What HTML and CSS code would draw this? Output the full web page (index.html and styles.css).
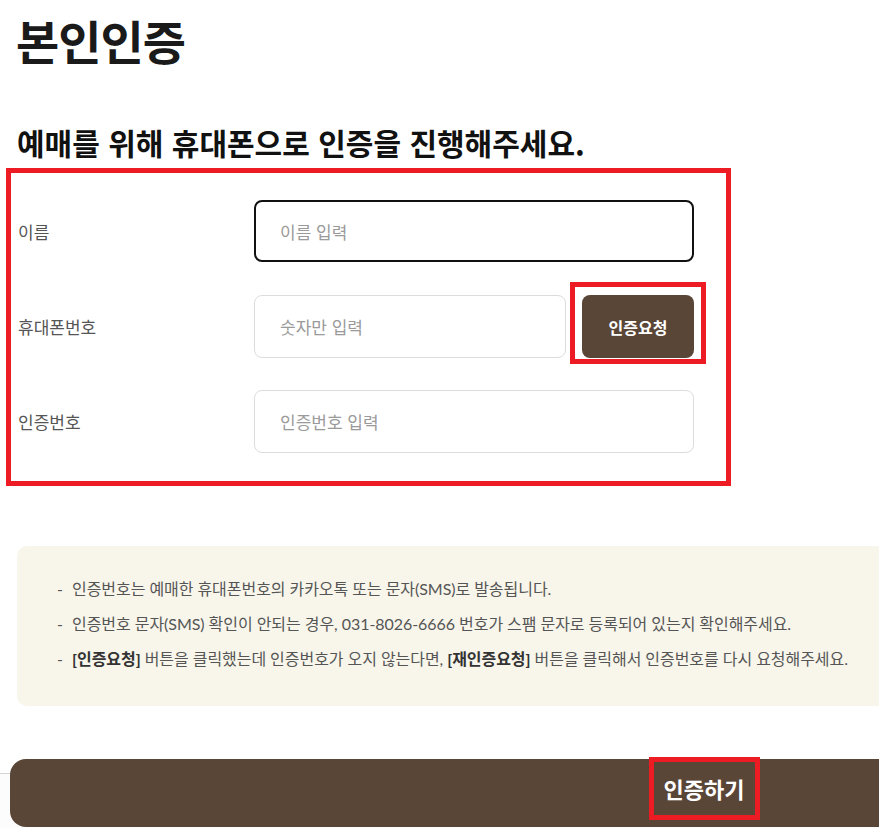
FILE: index.html
```html
<!DOCTYPE html>
<html lang="ko">
<head>
    <meta charset="UTF-8">
    <meta name="viewport" content="width=device-width, initial-scale=1.0">
    <title>본인인증</title>
    <link rel="stylesheet" href="styles.css">
</head>
<body>
<div class="page">
    <h1 class="title">본인인증</h1>
    <h2 class="sub_title">예매를 위해 휴대폰으로 인증을 진행해주세요.</h2>

    <div class="form mark">
        <div class="row">
            <label class="label" for="name">이름</label>
            <input id="name" class="input input_on" type="text" placeholder="이름 입력" autofocus>
        </div>
        <div class="row">
            <label class="label" for="phone">휴대폰번호</label>
            <input id="phone" class="input input_phone" type="text" placeholder="숫자만 입력">
            <span class="btn_mark mark">
                <button class="btn_req" type="button">인증요청</button>
            </span>
        </div>
        <div class="row">
            <label class="label" for="code">인증번호</label>
            <input id="code" class="input" type="text" placeholder="인증번호 입력">
        </div>
    </div>

    <div class="notice">
        <ul>
            <li>인증번호는 예매한 휴대폰번호의 카카오톡 또는 문자(SMS)로 발송됩니다.</li>
            <li>인증번호 문자(SMS) 확인이 안되는 경우, 031-8026-6666 번호가 스팸 문자로 등록되어 있는지 확인해주세요.</li>
            <li><b>[인증요청]</b> 버튼을 클릭했는데 인증번호가 오지 않는다면, <b>[재인증요청]</b> 버튼을 클릭해서 인증번호를 다시 요청해주세요.</li>
        </ul>
    </div>

    <div class="bottom">
        <button class="btn_submit" type="button"><span class="submit_mark mark">인증하기</span></button>
    </div>
</div>
</body>
</html>
```

FILE: styles.css
```css
html, body {
    margin: 0;
    padding: 0;
    background-color: #fff;
    overflow: hidden;
    font-family: "Noto Sans CJK KR", "Noto Sans", sans-serif;
    color: #111;
}

.page {
    width: 879px;
    height: 828px;
    overflow: hidden;
}

.title {
    margin: 12px 0 0;
    padding-left: 16px;
    font-size: 47px;
    line-height: 56px;
    font-weight: 700;
    color: #1a1a1a;
    letter-spacing: -1px;
}

.sub_title {
    margin: 54px 0 0;
    padding-left: 17px;
    font-size: 30px;
    line-height: 40px;
    font-weight: 700;
    color: #111;
}

/* 빨간 표시 박스 */
.mark {
    border: 5px solid #ed1c24;
    box-sizing: border-box;
}

.form {
    width: 725px;
    height: 318px;
    margin: 6px 0 0 6px;
    padding: 27px 0 28px 7px;
    display: flex;
    flex-direction: column;
    gap: 32px;
}

.row {
    height: 63px;
    display: flex;
    align-items: flex-start;
}

.label {
    width: 236px;
    flex: none;
    font-size: 17px;
    line-height: 63px;
    color: #555;
}

.input {
    width: 440px;
    height: 63px;
    box-sizing: border-box;
    border: 1px solid #dcdcdc;
    border-radius: 8px;
    padding: 0 0 0 25px;
    font-family: "Noto Sans CJK KR", sans-serif;
    font-size: 17px;
    color: #333;
    outline: none;
    background-color: #fff;
}

.input::placeholder {
    color: #9a9a9a;
}

.input_on {
    height: 62px;
    border: 2px solid #111;
    padding-left: 24px;
}

.input_phone {
    width: 312px;
}

.btn_mark {
    display: block;
    margin: -13px 0 0 4px;
    padding: 8px 7px 1px 7px;
}

.btn_req {
    display: block;
    width: 112px;
    height: 63px;
    border: none;
    border-radius: 8px;
    background-color: #5a4637;
    color: #fff;
    font-family: "Noto Sans CJK KR", sans-serif;
    font-size: 16px;
    font-weight: 700;
    cursor: pointer;
}

.notice {
    width: 1380px;
    margin: 60px 0 0 17px;
    padding: 25px 0 30px 40px;
    box-sizing: border-box;
    background-color: #f8f5eb;
    border-radius: 10px;
    font-family: Lato, "Noto Sans CJK KR", sans-serif;
    font-size: 16px;
    color: #555;
}

.notice ul {
    margin: 0;
    padding: 0;
    list-style: none;
}

.notice li {
    line-height: 35px;
    letter-spacing: -0.05px;
}

.notice li:before {
    content: '-';
    display: inline-block;
    width: 15px;
}

.notice b {
    color: #333;
    font-weight: 700;
}

.bottom {
    margin-top: 67px;
    border-top: 1px solid #d4d4d4;
    background-color: #fcfcfc;
    height: 60px;
}

.btn_submit {
    display: flex;
    justify-content: center;
    align-items: flex-start;
    width: 1394px;
    height: 68px;
    margin: -15px 0 0 10px;
    padding: 0;
    border: none;
    border-radius: 16px 0 0 16px;
    background-color: #5a4637;
    cursor: pointer;
}

.submit_mark {
    display: block;
    width: 111px;
    height: 63px;
    margin-top: -2px;
    margin-left: -6px;
    color: #fff;
    font-family: "Noto Sans CJK KR", sans-serif;
    font-size: 22px;
    font-weight: 700;
    line-height: 53px;
}
```
